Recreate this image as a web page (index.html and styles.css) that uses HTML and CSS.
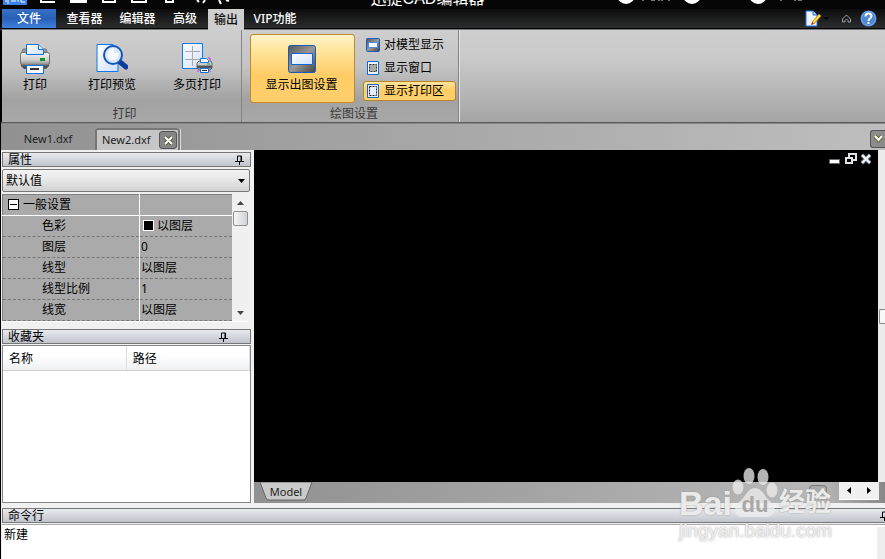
FILE: index.html
```html
<!DOCTYPE html>
<html lang="zh-CN">
<head>
<meta charset="utf-8">
<title>CAD编辑器</title>
<link rel="stylesheet" href="styles.css">
</head>
<body>
<header class="titlebar">
  <svg class="quick-icons" width="240" height="9" viewBox="0 0 240 9" aria-hidden="true">
    <path d="M3 0h24v4q0 1-1 1H4q-1 0-1-1z" fill="#3c82ec"/>
    <path d="M6 0v2M8 0v4M11 1h5M18 0v2M21 0v2h4" stroke="#fff" fill="none"/>
    <path d="M41 0v2h14M71 0h15v2H71zM103 0v2h12V0M132 0v2h14V0M166 0v2h7V0M203 3l2-3M197 0l2 2M219 0l2 4M226 0l3 1" stroke="#fff" stroke-width="2" fill="none"/>
  </svg>
  <h1 class="app-title">迅捷CAD编辑器</h1>
  <svg class="account-icons" width="190" height="9" viewBox="0 0 190 9" aria-hidden="true">
    <g fill="#fff"><circle cx="11" cy="-5" r="9"/><circle cx="77" cy="-5" r="9"/><circle cx="143" cy="-5" r="9"/></g>
    <path d="M28 0v1M36 0h4M43 0h2M47 0v1M54 0v1M166 0v1M179 0h2M183 0h4" stroke="#ddd"/>
  </svg>
</header>
<nav class="menubar">
  <button class="menu file">文件</button>
  <button class="menu w-viewer">查看器</button>
  <button class="menu w-editor">编辑器</button>
  <button class="menu w-adv">高级</button>
  <button class="menu active">输出</button>
  <button class="menu w-vip">VIP功能</button>
  <div class="menu-tools">
    <button class="tool" aria-label="样式">
      <svg width="24" height="17" viewBox="0 0 24 17"><path d="M1 1h7l4 4v11H1z" fill="#eef4ff" stroke="#2070e0"/><path d="M8 1v4h4" fill="#bcd4ff" stroke="#2070e0"/><path d="M7 12l7-8 2 2-7 8z" fill="#ffd83c" stroke="#a07818" stroke-width=".7"/><path d="M6 15l1-3 2 2z" fill="#d02020"/><path d="M18 7h6l-3 3z" fill="#050505"/></svg>
    </button>
    <button class="tool" aria-label="折叠功能区">
      <svg width="11" height="10" viewBox="0 0 11 10"><path d="M1.500 8V5L5.500 1l4 4v3H7V6.500L5.500 5 4 6.500V8z" fill="none" stroke="#9aa0a4"/></svg>
    </button>
    <button class="tool" aria-label="帮助">
      <svg width="17" height="17" viewBox="0 0 17 17"><circle cx="8.500" cy="8.500" r="8" fill="#4f86d6"/><circle cx="8.500" cy="8.500" r="7" fill="none" stroke="#79a8e8"/><path d="M5.500 6.500q0-3 3-3t3 2.500q0 1.500-1.500 2.300T8.500 11" fill="none" stroke="#fff" stroke-width="2"/><path d="M7.500 12h2v2h-2z" fill="#fff"/></svg>
    </button>
  </div>
</nav>
<section class="ribbon">
  <div class="group print-group">
    <div class="group-body">
      <button class="big first">
        <svg width="32" height="32" viewBox="0 0 32 32"><defs><linearGradient id="pb" x2="0" y2="1"><stop stop-color="#f4f4f4"/><stop offset=".6" stop-color="#cfcfcf"/><stop offset="1" stop-color="#858585"/></linearGradient><linearGradient id="sheet" x2="1" y2="1"><stop stop-color="#fff"/><stop offset="1" stop-color="#cfe0fb"/></linearGradient></defs><path d="M4 6h23l2 5H2z" fill="#999" stroke="#777"/><path d="M2 20h28v3l-3 3H5l-3-3z" fill="#505050"/><path d="M1.500 11.500q0-2 2-2h25q2 0 2 2V20q0 2-2 2h-25q-2 0-2-2z" fill="url(#pb)" stroke="#707070"/><path d="M7.500 1.500h12l5 5v5h-17z" fill="url(#sheet)" stroke="#0870e0"/><path d="M19.500 1.500v5h5" fill="#dce9ff" stroke="#0870e0"/><path d="M21 15h5v3h-5z" fill="#129820"/><path d="M7.500 22.500h17v8h-17z" fill="#f8fbff" stroke="#0870e0"/><path d="M11 25h9v2h-9z" fill="#333"/></svg>
        <span>打印</span>
      </button>
      <button class="big second">
        <svg width="32" height="32" viewBox="0 0 32 32"><path d="M1 1.500h16l5 5v22H1z" fill="url(#sheet)" stroke="#0878ec"/><path d="M16 2v5h6" fill="#fff" stroke="#0878ec"/><path d="M24 19l6 5" stroke="#0c3c9c" stroke-width="5" stroke-linecap="round"/><circle cx="17" cy="12" r="9" fill="#d8e8fa" stroke="#1456b8" stroke-width="2"/><path d="M11 12q1-6 7-7v5h5q-1 7-6 7t-6-5z" fill="#f6faff"/></svg>
        <span>打印预览</span>
      </button>
      <button class="big third">
        <svg width="32" height="32" viewBox="0 0 32 32"><path d="M1.500.5h20v25h-20z" fill="url(#sheet)" stroke="#0878ec"/><path d="M11.500 3v20M4 8.500h15M4 16.500h15" stroke="#aaa"/><path d="M18 18h12l1 2v5l-2 2H18l-2-2v-5z" fill="#ccc" stroke="#666"/><path d="M16 22.500h15v3H16z" fill="#555"/><path d="M19.500 15.500h6l2 2v2h-8z" fill="#fff" stroke="#0878ec"/><path d="M19.500 25.500h8v4h-8z" fill="#fff" stroke="#0870e0"/><path d="M21 27.500h5" stroke="#222"/><path d="M26 21h3" stroke="#18a028"/><path d="M27 15h2v2M17 27v2M29 28v1" stroke="#f020f0" fill="none"/></svg>
        <span>多页打印</span>
      </button>
    </div>
    <div class="group-label">打印</div>
  </div>
  <div class="group plot-group">
    <div class="group-body">
      <button class="big selected">
        <svg width="28" height="28" viewBox="0 0 28 28"><defs><linearGradient id="mon" x2="1" y2="1"><stop stop-color="#555"/><stop offset=".5" stop-color="#999"/><stop offset="1" stop-color="#444"/></linearGradient></defs><rect x=".5" y=".5" width="27" height="27" rx="2" fill="url(#mon)" stroke="#155cc0"/><path d="M3.500 8.500h21v11h-21z" fill="url(#sheet)" stroke="#1464d8"/></svg>
        <span>显示出图设置</span>
      </button>
      <div class="small-list">
        <button class="small"><svg width="14" height="14" viewBox="0 0 14 14"><rect x=".5" y=".5" width="13" height="13" rx="1" fill="url(#mon)" stroke="#155cc0"/><path d="M2.500 4.500h9v5h-9z" fill="#fff" stroke="#4c8ce8"/></svg>对模型显示</button>
        <button class="small"><svg width="14" height="14" viewBox="0 0 14 14"><path d="M1.500.5h11v13h-11z" fill="#eef5ff" stroke="#0868d8"/><path d="M3.500 3.500h7v7h-7z" fill="#aaa" stroke="#333" stroke-dasharray="2 1"/></svg>显示窗口</button>
        <button class="small on"><svg width="14" height="14" viewBox="0 0 14 14"><path d="M1.500.5h11v13h-11z" fill="#e4eeff" stroke="#0868d8"/><path d="M3.500 2.500h7v9h-7z" fill="none" stroke="#222" stroke-dasharray="2 1"/></svg>显示打印区</button>
      </div>
    </div>
    <div class="group-label">绘图设置</div>
  </div>
</section>
<div class="doc-tabs">
  <button class="doc">New1.dxf</button>
  <div class="doc-active">
    <button class="doc-name">New2.dxf</button>
    <button class="close" aria-label="关闭"><svg width="9" height="9" viewBox="0 0 9 9"><path d="M1 1l7 7M8 1L1 8" stroke="#5c5830" stroke-width="4"/><path d="M1 1l7 7M8 1L1 8" stroke="#fff" stroke-width="2"/></svg></button>
  </div>
  <button class="more" aria-label="更多"><svg width="9" height="8" viewBox="0 0 9 8"><path d="M1 1l3.500 4L8 1" stroke="#68642c" stroke-width="4" fill="none"/><path d="M1 1l3.500 4L8 1" stroke="#fff" stroke-width="2" fill="none"/></svg></button>
</div>
<main class="workspace">
  <aside class="dock">
    <section>
      <h2 class="panel-title">属性<svg class="pin" width="9" height="10" viewBox="0 0 9 10"><path d="M2.500 6V1h4v5M0 6.500h9M4.500 7v3" fill="none" stroke="#000"/><path d="M6 1v5" stroke="#000"/></svg></h2>
      <div class="combo">
        <select aria-label="对象"><option>默认值</option></select>
        <svg width="7" height="4" viewBox="0 0 7 4"><path d="M0 0h7L3.500 4z"/></svg>
      </div>
      <div class="props">
        <table>
          <tr class="cat"><th><span class="minus"></span>一般设置</th><td></td></tr>
          <tr><th>色彩</th><td><span class="swatch"></span>以图层</td></tr>
          <tr><th>图层</th><td>0</td></tr>
          <tr><th>线型</th><td>以图层</td></tr>
          <tr><th>线型比例</th><td>1</td></tr>
          <tr><th>线宽</th><td>以图层</td></tr>
        </table>
        <div class="vbar">
          <svg width="7" height="4" viewBox="0 0 7 4"><path d="M0 4h7L3.500 0z" fill="#444"/></svg>
          <span class="thumb"></span>
          <svg class="down" width="7" height="4" viewBox="0 0 7 4"><path d="M0 0h7L3.500 4z" fill="#444"/></svg>
        </div>
      </div>
    </section>
    <section class="favorites">
      <h2 class="panel-title fav-title">收藏夹<svg class="pin" width="9" height="10" viewBox="0 0 9 10"><path d="M2.500 6V1h4v5M0 6.500h9M4.500 7v3" fill="none" stroke="#000"/><path d="M6 1v5" stroke="#000"/></svg></h2>
      <div class="fav-list">
        <table><tr><th>名称</th><th>路径</th></tr></table>
      </div>
    </section>
  </aside>
  <section class="drawing">
    <div class="view">
      <div class="canvas">
        <svg width="44" height="12" viewBox="0 0 44 12"><path d="M1.500 6.500h10v4h-10z" fill="#fff" stroke="#5c6a74"/><path d="M21 5V1h7v6h-3" fill="none" stroke="#dce4ea" stroke-width="2"/><path d="M18 5h6v5h-6z" fill="#000" stroke="#dce4ea" stroke-width="2"/><path d="M34 2l8 8M42 2l-8 8" stroke="#6c7a84" stroke-width="4"/><path d="M34 2l8 8M42 2l-8 8" stroke="#f4f8fa" stroke-width="2"/></svg>
      </div>
      <div class="side-bar"><span></span></div>
    </div>
    <div class="model-row">
      <button class="model"><svg width="54" height="19" viewBox="0 0 54 19"><path d="M0 0l6 16q1 2 3 2h34q2 0 3-2l6-16z" fill="#cacaca" stroke="#666"/></svg><span>Model</span></button>
      <svg class="overflow" width="18" height="18" viewBox="0 0 18 18"><rect x=".5" y="3.500" width="17" height="17" rx="3" fill="#aaa" stroke="#777"/><path d="M5 9l4 4 4-4" fill="none" stroke="#fff8e0" stroke-width="2"/></svg>
      <div class="hbar">
        <svg width="4" height="7" viewBox="0 0 4 7"><path d="M4 0v7L0 3.500z"/></svg>
        <svg width="4" height="7" viewBox="0 0 4 7"><path d="M0 0v7l4-3.500z"/></svg>
      </div>
    </div>
  </section>
</main>
<section class="command">
  <h2 class="panel-title">命令行<svg class="pin" width="9" height="10" viewBox="0 0 9 10"><path d="M2.500 6V1h4v5M0 6.500h9M4.500 7v3" fill="none" stroke="#000"/></svg></h2>
  <div class="output"><span>新建</span><i></i></div>
</section>
<div class="watermark">
  <div class="brand">
    <span class="bai">Bai</span>
    <span class="paw"><svg width="46" height="50" viewBox="0 0 46 50"><ellipse cx="6" cy="19" rx="5.500" ry="7.500"/><ellipse cx="17" cy="8" rx="5.500" ry="8"/><ellipse cx="31" cy="9" rx="5.500" ry="8"/><ellipse cx="40" cy="22" rx="5.500" ry="7.500"/><path d="M23 20q5 0 9 6 3 5 8 9 4 4 2 9-2 5-8 5H11q-7 0-8-6-1-4 3-8 5-4 8-9 4-6 9-6z"/></svg><span class="du">du</span></span>
    <span class="jy">经验</span>
  </div>
  <div class="site">jingyan.baidu.com</div>
</div>
</body>
</html>
```
FILE: styles.css
```css
* { box-sizing: border-box; }
body {
  margin: 0;
  height: 100vh;
  overflow: hidden;
  display: flex;
  flex-direction: column;
  background: #f0f0f0;
  color: #000;
  font: 12px/16px "Noto Sans", "Noto Sans CJK SC", sans-serif;
}
button, select { font: inherit; color: inherit; border: 0; margin: 0; padding: 0; background: none; }
svg { display: block; flex: none; }
h1, h2 { margin: 0; font-weight: normal; }

.titlebar {
  flex: none;
  height: 9px;
  overflow: hidden;
  display: flex;
  justify-content: space-between;
  align-items: flex-end;
  background: #050505;
  color: #fff;
}
.app-title { font: 16px/16px "Liberation Sans", "Noto Sans CJK SC", sans-serif; padding-bottom: 2px; }
.account-icons { margin-right: 80px; }

.menubar {
  flex: none;
  height: 20px;
  display: flex;
  background: linear-gradient(#0c0c0c, #2c2d2e);
  border-left: 2px solid #000;
  border-bottom: 1px solid #000;
  color: #fff;
}
.menu { font-weight: 500; text-align: center; line-height: 20px; }
.file { width: 54px; background: linear-gradient(#3870c4, #2860b8 50%, #4080dc); }
.w-viewer { width: 57px; }
.w-editor { width: 49px; }
.w-adv { width: 46px; }
.active { width: 36px; height: 21px; background: #cecece; color: #111; position: relative; }
.w-vip { width: 62px; }
.menu-tools { margin-left: auto; margin-right: 8px; display: flex; align-items: center; }
.menu-tools .tool:nth-child(2) { margin: 0 8px 0 12px; }

.ribbon {
  flex: none;
  height: 94px;
  display: flex;
  border-top: 1px solid #777;
  border-left: 2px solid #000;
  border-bottom: 1px solid #5c5c5c;
  background: linear-gradient(#cecece, #cacaca 30%, #a5a5a5);
}
.group { display: flex; flex-direction: column; border-right: 1px solid #858585; box-shadow: 1px 0 #e4e4e4; background: linear-gradient(#cecece, #c4c4c4 40%, #a2a2a2 75%, #a8a8a8); }
.print-group { width: 240px; }
.plot-group { width: 217px; padding-left: 8px; }
.group-body { display: flex; height: 76px; }
.group-label { text-align: center; color: #3a3a3a; line-height: 16px; }
.print-group .group-label { padding-left: 6px; }
.big { display: flex; flex-direction: column; align-items: center; padding-top: 13px; height: 69px; }
.big svg { margin-bottom: 2px; height: 32px; }
.first { width: 66px; }
.second { width: 88px; }
.third { width: 82px; }
.selected { width: 105px; margin-top: 4px; padding: 8px 2px 0 0; border: 1px solid #c08a24; border-radius: 3px; background: linear-gradient(#fff4cc, #ffe498 25%, #ffcc66 60%, #ffce6c); }
.small-list { margin: 5px 0 0 8px; width: 93px; }
.small { display: flex; align-items: center; gap: 4px; width: 100%; height: 20px; margin-bottom: 3px; padding-left: 2px; border: 1px solid transparent; border-radius: 3px; }
.on { border-color: #b88428; background: linear-gradient(#ffe49c, #ffcc62 50%, #ffd070); }

.doc-tabs {
  flex: none;
  height: 27px;
  display: flex;
  align-items: flex-end;
  border-left: 1px solid #000;
  background: linear-gradient(90deg, #919191, #bebebe);
  box-shadow: inset 0 1px #858585;
  color: #222;
  font-size: 11px;
}
.doc { width: 94px; height: 22px; }
.doc-active { display: flex; align-items: center; height: 22px; width: 85px; padding: 0 1px 0 5px; background: #c6c6c6; border: 2px solid #777; border-bottom: 0; border-radius: 3px 3px 0 0; box-shadow: 1px 0 #ddd; }
.close { width: 18px; height: 18px; display: grid; place-items: center; margin-left: auto; flex: none; border: 1px solid #555; border-radius: 3px; background: #858585; }
.more { width: 15px; height: 18px; margin: 0 0 2px auto; display: grid; place-items: center; border: 1px solid #555; border-right: 0; border-radius: 3px 0 0 3px; background: #8c8c8c; }

.workspace { flex: 1; min-height: 0; display: flex; border-left: 1px solid #000; }
.dock { width: 253px; flex: none; display: flex; flex-direction: column; padding: 2px 3px 0 1px; gap: 7px; }
.panel-title { height: 15px; display: flex; align-items: center; justify-content: space-between; padding: 0 6px 0 5px; border: 1px solid #777; background: linear-gradient(#e8eaee, #c0c4cc); font-size: 12px; line-height: 13px; }
.fav-title { padding-right: 22px; }
.combo { position: relative; height: 23px; margin: 2px 1px 2px 0; }
.combo select { appearance: none; width: 100%; height: 23px; padding-left: 3px; border: 1px solid #777; border-radius: 2px; background: linear-gradient(#f4f4f4, #e6e6e6 50%, #d2d2d2); }
.combo svg { position: absolute; right: 5px; top: 10px; pointer-events: none; }
.props { display: flex; margin-right: 3px; border-bottom: 1px solid #fff; }
.props table { flex: 1; border-collapse: collapse; table-layout: fixed; background: #aaa; border: 1px solid #808080; border-right: 0; border-bottom: 0; }
.props th, .props td { height: 21px; padding: 0 0 0 1px; font-weight: normal; text-align: left; line-height: 16px; border-bottom: 1px dashed #777; }
.props th { width: 137px; padding-left: 39px; border-right: 1px solid #fff; }
.props .cat th { padding-left: 5px; }
.props .cat th, .props .cat td { border-bottom: 1px solid #fff; }
.props td { font-size: 12px; }
.minus { display: inline-block; width: 11px; height: 11px; margin-right: 4px; vertical-align: -1px; border: 1px solid #000; background: linear-gradient(#000, #000) center / 7px 1px no-repeat #fff; }
.swatch { display: inline-block; width: 11px; height: 11px; margin: 0 3px 0 2px; vertical-align: -1px; background: #000; border: 1px solid #fff; }
.vbar { width: 16px; display: flex; flex-direction: column; align-items: center; padding: 7px 0 6px 1px; background: #f0f0f0; }
.thumb { width: 15px; height: 15px; margin-top: 6px; border: 1px solid #909090; border-radius: 2px; background: linear-gradient(90deg, #f6f6f6, #d0d2d4); }
.down { margin-top: auto; }
.favorites { flex: 1; display: flex; flex-direction: column; }
.fav-list { flex: 1; margin-top: 1px; border: 1px solid #858590; background: #fff; }
.fav-list table { width: 100%; border-collapse: collapse; }
.fav-list th { width: 50%; height: 24px; padding: 2px 0 0 6px; text-align: left; font-weight: normal; border-right: 1px solid #ddd; border-bottom: 1px solid #d0d0d0; background: linear-gradient(#fff 40%, #eef0f2); }

.drawing { flex: 1; min-width: 0; display: flex; flex-direction: column; }
.view { flex: 1; display: flex; }
.canvas { flex: 1; display: flex; justify-content: flex-end; padding: 3px 6px 0; background: #000; }
.side-bar { width: 7px; padding-left: 1px; display: flex; align-items: center; background: #ececec; }
.side-bar span { width: 6px; height: 15px; border: 1px solid #888; border-right: 0; border-radius: 2px 0 0 2px; background: #f8f8f8; }
.model-row { height: 21px; display: flex; background: linear-gradient(90deg, #919191, #b8b8b8 90%, #888); }
.model { display: grid; place-items: center; height: 19px; margin-left: 6px; color: #222; font-size: 11px; }
.model svg, .model span { grid-area: 1 / 1; }
.model span { line-height: 16px; padding-right: 2px; }
.overflow { margin: 0 12px 0 auto; }
.hbar { width: 40px; height: 18px; margin-right: 6px; display: flex; align-items: center; justify-content: space-around; background: #f0f0f0; border-bottom: 1px solid #fff; }

.command { flex: none; height: 56px; padding: 5px 0 0 1px; display: flex; flex-direction: column; border-left: 1px solid #000; }
.command .panel-title { flex: none; padding-right: 0; border-right: 0; }
.command .pin { margin-right: -4px; }
.output { flex: 1; display: flex; justify-content: space-between; margin-top: 1px; border-top: 1px solid #aaa; background: #fff; padding: 2px 0 0 2px; }
.output i { width: 8px; background: #eee; }

.watermark { position: absolute; right: 49px; bottom: 18px; width: 157px; color: rgba(246, 246, 246, .9); font-family: "Liberation Sans", "Noto Sans CJK SC", sans-serif; text-shadow: 0 0 2px #999; pointer-events: none; }
.brand { display: flex; align-items: flex-end; height: 50px; margin-bottom: 3px; font-weight: bold; }
.bai { width: 53px; font-size: 34px; line-height: 30px; }
.paw { display: grid; place-items: end center; width: 46px; }
.paw svg, .du { grid-area: 1 / 1; }
.paw svg { fill: rgba(236, 236, 236, .76); }
.du { font-size: 22px; line-height: 26px; color: #a8a8a8; text-shadow: none; }
.jy { width: 54px; margin-left: 1px; font-size: 26px; line-height: 32px; }
.site { font-size: 19px; line-height: 20px; white-space: nowrap; }
```
